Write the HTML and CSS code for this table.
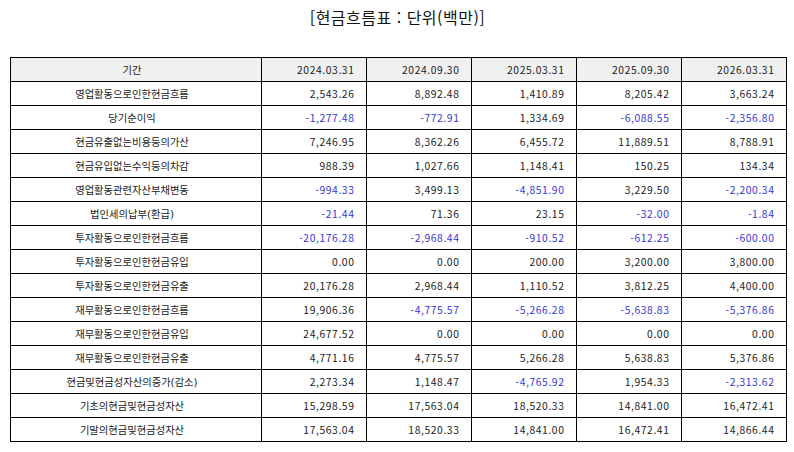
FILE: index.html
```html
<!DOCTYPE html>
<html lang="ko">
<head>
<meta charset="utf-8">
<link rel="stylesheet" href="styles.css">
</head>
<body>
<div class="page">
  <h1 class="title">[현금흐름표 : 단위(백만)]</h1>
  <table class="cf">
    <colgroup>
      <col class="c-label"><col class="c-num"><col class="c-num"><col class="c-num"><col class="c-num"><col class="c-num">
    </colgroup>
    <thead>
      <tr><th>기간</th><th class="n">2024.03.31</th><th class="n">2024.09.30</th><th class="n">2025.03.31</th><th class="n">2025.09.30</th><th class="n">2026.03.31</th></tr>
    </thead>
    <tbody>
      <tr><td>영업활동으로인한현금흐름</td><td class="n">2,543.26</td><td class="n">8,892.48</td><td class="n">1,410.89</td><td class="n">8,205.42</td><td class="n">3,663.24</td></tr>
      <tr><td>당기순이익</td><td class="n neg">-1,277.48</td><td class="n neg">-772.91</td><td class="n">1,334.69</td><td class="n neg">-6,088.55</td><td class="n neg">-2,356.80</td></tr>
      <tr><td>현금유출없는비용등의가산</td><td class="n">7,246.95</td><td class="n">8,362.26</td><td class="n">6,455.72</td><td class="n">11,889.51</td><td class="n">8,788.91</td></tr>
      <tr><td>현금유입없는수익등의차감</td><td class="n">988.39</td><td class="n">1,027.66</td><td class="n">1,148.41</td><td class="n">150.25</td><td class="n">134.34</td></tr>
      <tr><td>영업활동관련자산부채변동</td><td class="n neg">-994.33</td><td class="n">3,499.13</td><td class="n neg">-4,851.90</td><td class="n">3,229.50</td><td class="n neg">-2,200.34</td></tr>
      <tr><td>법인세의납부(환급)</td><td class="n neg">-21.44</td><td class="n">71.36</td><td class="n">23.15</td><td class="n neg">-32.00</td><td class="n neg">-1.84</td></tr>
      <tr><td>투자활동으로인한현금흐름</td><td class="n neg">-20,176.28</td><td class="n neg">-2,968.44</td><td class="n neg">-910.52</td><td class="n neg">-612.25</td><td class="n neg">-600.00</td></tr>
      <tr><td>투자활동으로인한현금유입</td><td class="n">0.00</td><td class="n">0.00</td><td class="n">200.00</td><td class="n">3,200.00</td><td class="n">3,800.00</td></tr>
      <tr><td>투자활동으로인한현금유출</td><td class="n">20,176.28</td><td class="n">2,968.44</td><td class="n">1,110.52</td><td class="n">3,812.25</td><td class="n">4,400.00</td></tr>
      <tr><td>재무활동으로인한현금흐름</td><td class="n">19,906.36</td><td class="n neg">-4,775.57</td><td class="n neg">-5,266.28</td><td class="n neg">-5,638.83</td><td class="n neg">-5,376.86</td></tr>
      <tr><td>재무활동으로인한현금유입</td><td class="n">24,677.52</td><td class="n">0.00</td><td class="n">0.00</td><td class="n">0.00</td><td class="n">0.00</td></tr>
      <tr><td>재무활동으로인한현금유출</td><td class="n">4,771.16</td><td class="n">4,775.57</td><td class="n">5,266.28</td><td class="n">5,638.83</td><td class="n">5,376.86</td></tr>
      <tr><td>현금및현금성자산의증가(감소)</td><td class="n">2,273.34</td><td class="n">1,148.47</td><td class="n neg">-4,765.92</td><td class="n">1,954.33</td><td class="n neg">-2,313.62</td></tr>
      <tr><td>기초의현금및현금성자산</td><td class="n">15,298.59</td><td class="n">17,563.04</td><td class="n">18,520.33</td><td class="n">14,841.00</td><td class="n">16,472.41</td></tr>
      <tr><td>기말의현금및현금성자산</td><td class="n">17,563.04</td><td class="n">18,520.33</td><td class="n">14,841.00</td><td class="n">16,472.41</td><td class="n">14,866.44</td></tr>
    </tbody>
  </table>
</div>
</body>
</html>
```
FILE: styles.css
```css
html, body {
  margin: 0;
  padding: 0;
  background: #ffffff;
}
.page {
  padding: 0 9px 0 10px;
  font-family: "DejaVu Sans", "Noto Sans CJK KR", sans-serif;
  color: #1a1a1a;
}
.title {
  margin: 0;
  padding-top: 6px;
  height: 57px;
  box-sizing: border-box;
  text-align: center;
  font-family: "Noto Sans CJK KR", sans-serif;
  font-size: 16px;
  font-weight: normal;
  line-height: 22px;
  letter-spacing: 0.5px;
  color: #111;
}
.cf {
  width: 775px;
  border-collapse: collapse;
  table-layout: fixed;
  font-size: 10.3px;
  border: 1.5px solid #000;
}
.c-label { width: 251px; }
.c-num { width: 105px; }
.cf tr {
  height: 24px;
}
.cf th, .cf td {
  border: 1px solid #000;
  padding: 0 12px 0 4px;
  text-align: center;
  font-weight: normal;
  line-height: 14px;
  white-space: nowrap;
}
.cf th {
  background: #f0f0f0;
}
.cf .n {
  text-align: right;
  font-family: "Noto Sans CJK KR", sans-serif;
  letter-spacing: 0.6px;
  padding-right: 11.5px;
}
.cf .neg {
  color: #3535d6;
}
```
